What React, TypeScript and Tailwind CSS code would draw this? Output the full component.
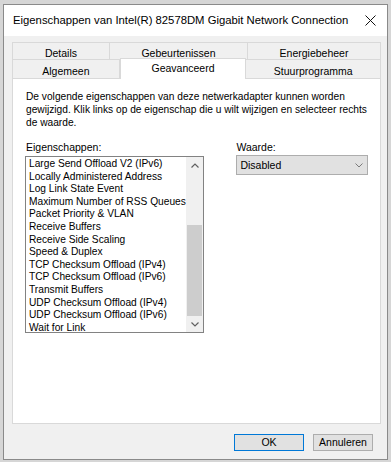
import React from 'react';

const items = [
  'Large Send Offload V2 (IPv6)',
  'Locally Administered Address',
  'Log Link State Event',
  'Maximum Number of RSS Queues',
  'Packet Priority & VLAN',
  'Receive Buffers',
  'Receive Side Scaling',
  'Speed & Duplex',
  'TCP Checksum Offload (IPv4)',
  'TCP Checksum Offload (IPv6)',
  'Transmit Buffers',
  'UDP Checksum Offload (IPv4)',
  'UDP Checksum Offload (IPv6)',
  'Wait for Link',
];

function Tab({ label, width, active }: { label: string; width: string; active?: boolean }) {
  if (active) {
    return (
      <div
        className={`${width} h-[21px] -mt-[1px] -mb-[1px] relative z-10 bg-white border border-b-0 border-[#d9d9d9] flex justify-center pt-[3px]`}
      >
        {label}
      </div>
    );
  }
  return (
    <div className={`${width} h-full bg-[#f0f0f0] border border-b-0 border-[#d9d9d9] -ml-[1px] first:ml-0 flex justify-center items-center pt-[4px]`}>
      {label}
    </div>
  );
}

export default function App() {
  return (
    <div className="w-[391px] h-[462px] overflow-hidden bg-[#d6d6d6] pt-[4px] pl-[3px] font-['Liberation_Sans',Arial,sans-serif] text-[10.5px] leading-[13px] text-black">
      <div className="w-[385px] h-[456px] border border-[#8a8a8a] bg-[#f0f0f0] flex flex-col">
        {/* title bar */}
        <div className="h-[31px] bg-white flex items-center pl-[9px] pr-[11px] shrink-0">
          <span className="flex-1 text-[11.3px] whitespace-nowrap">Eigenschappen van Intel(R) 82578DM Gigabit Network Connection</span>
          <svg width="11" height="11" viewBox="0 0 11 11" className="shrink-0">
            <path d="M0.5 0.5 L10.5 10.5 M10.5 0.5 L0.5 10.5" stroke="#111" strokeWidth="1" fill="none" />
          </svg>
        </div>

        <div className="ml-[8px] mt-[6px] w-[369px] flex flex-col">
          {/* back row tabs */}
          <div className="flex h-[17px]">
            <Tab label="Details" width="w-[98px]" />
            <Tab label="Gebeurtenissen" width="w-[139px]" />
            <Tab label="Energiebeheer" width="w-[134px]" />
          </div>
          {/* front row tabs */}
          <div className="flex h-[19px] items-stretch">
            <Tab label="Algemeen" width="w-[108px]" />
            <Tab label="Geavanceerd" width="w-[127px]" active />
            <Tab label="Stuurprogramma" width="w-[136px]" />
          </div>

          {/* panel */}
          <div className="h-[346px] bg-white border border-[#d9d9d9] px-[12px] pt-[11px]">
            <p className="pl-[1px] whitespace-nowrap text-[10.2px]">
              De volgende eigenschappen van deze netwerkadapter kunnen worden
              <br />
              gewijzigd. Klik links op de eigenschap die u wilt wijzigen en selecteer rechts
              <br />
              de waarde.
            </p>

            <div className="flex mt-[12px]">
              <div className="w-[180px] flex flex-col">
                <span className="pl-[1px] mb-[2px]">Eigenschappen:</span>
                <div className="h-[177px] border border-[#828282] flex">
                  <ul className="flex-1 pl-[3px] pt-[1px] text-[10.2px] leading-[12.6px] overflow-hidden">
                    {items.map((it) => (
                      <li key={it} className="whitespace-nowrap">
                        {it}
                      </li>
                    ))}
                  </ul>
                  <div className="w-[17px] bg-[#f0f0f0] flex flex-col">
                    <div className="h-[16px] flex items-center justify-center">
                      <svg width="8" height="5" viewBox="0 0 8 5">
                        <path d="M0.5 4.5 L4 1 L7.5 4.5" stroke="#606060" strokeWidth="1.2" fill="none" />
                      </svg>
                    </div>
                    <div className="flex-1 flex flex-col justify-end">
                      <div className="mx-[1px] h-[91px] bg-[#cdcdcd]" />
                    </div>
                    <div className="h-[16px] flex items-center justify-center">
                      <svg width="8" height="5" viewBox="0 0 8 5">
                        <path d="M0.5 0.5 L4 4 L7.5 0.5" stroke="#606060" strokeWidth="1.2" fill="none" />
                      </svg>
                    </div>
                  </div>
                </div>
              </div>

              <div className="ml-[32px] w-[132px] flex flex-col">
                <span className="mb-[1px]">Waarde:</span>
                <div className="h-[20px] bg-[#e1e1e1] border border-[#adadad] flex items-center pl-[3px] pr-[4px]">
                  <span className="flex-1">Disabled</span>
                  <svg width="8" height="5" viewBox="0 0 8 5">
                    <path d="M0.5 0.5 L4 4 L7.5 0.5" stroke="#7a7a7a" strokeWidth="1" fill="none" />
                  </svg>
                </div>
              </div>
            </div>
          </div>
        </div>

        {/* buttons */}
        <div className="flex justify-end gap-[9px] pr-[14px] mt-[10px]">
          <button className="w-[70px] h-[17px] bg-[#e1e1e1] border border-[#0078d7] flex items-center justify-center">
            OK
          </button>
          <button className="w-[60px] h-[17px] bg-[#e1e1e1] border border-[#adadad] flex items-center justify-center">
            Annuleren
          </button>
        </div>
      </div>
    </div>
  );
}
